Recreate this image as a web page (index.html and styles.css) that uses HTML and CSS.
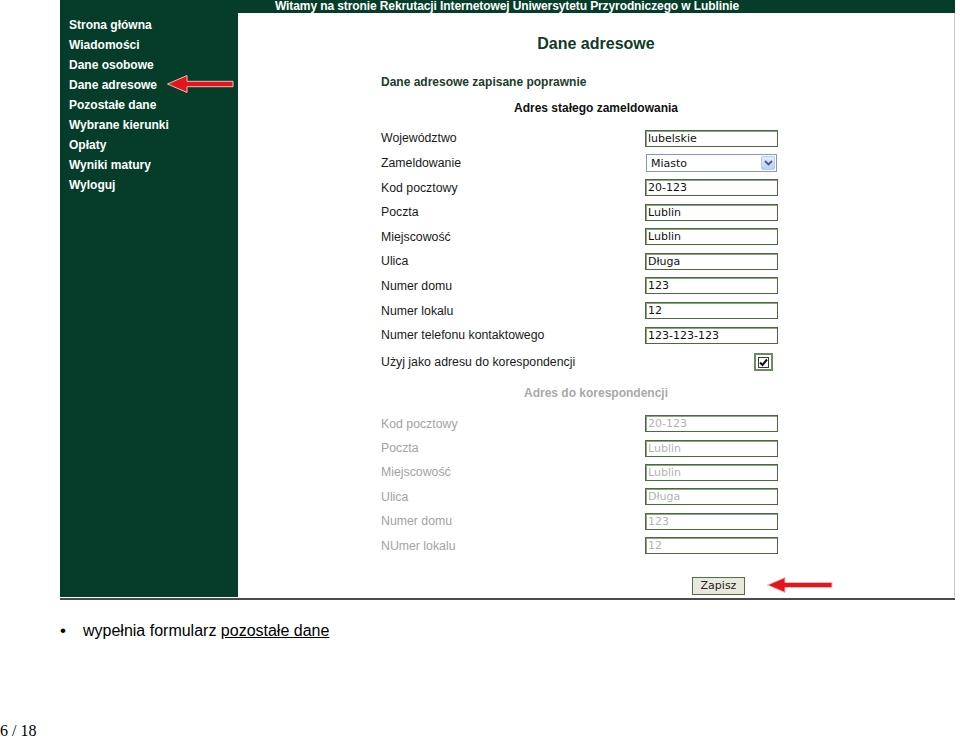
FILE: index.html
```html
<!DOCTYPE html>
<html lang="pl">
<head>
<meta charset="utf-8">
<title>Dane adresowe</title>
<link rel="stylesheet" href="styles.css">
</head>
<body>
<div class="page">
  <div class="frame">
    <nav class="sidebar">
      <a class="nav-item">Strona główna</a>
      <a class="nav-item">Wiadomości</a>
      <a class="nav-item">Dane osobowe</a>
      <a class="nav-item">Dane adresowe</a>
      <a class="nav-item">Pozostałe dane</a>
      <a class="nav-item">Wybrane kierunki</a>
      <a class="nav-item">Opłaty</a>
      <a class="nav-item">Wyniki matury</a>
      <a class="nav-item">Wyloguj</a>
    </nav>
    <main class="main">
      <div class="topbar">Witamy na stronie Rekrutacji Internetowej Uniwersytetu Przyrodniczego w Lublinie</div>
      <div class="content">
        <h1 class="title">Dane adresowe</h1>
        <p class="success">Dane adresowe zapisane poprawnie</p>
        <h2 class="section">Adres stałego zameldowania</h2>
        <div class="form">
          <div class="row"><span class="label">Województwo</span><input class="field" value="lubelskie"></div>
          <div class="row"><span class="label">Zameldowanie</span>
            <div class="select"><span class="select-text">Miasto</span><span class="select-btn"><svg width="9" height="6" viewBox="0 0 9 6"><path d="M1 1 L4.5 4.5 L8 1" fill="none" stroke="#3d5e8c" stroke-width="1.8"/></svg></span></div>
          </div>
          <div class="row"><span class="label">Kod pocztowy</span><input class="field" value="20-123"></div>
          <div class="row"><span class="label">Poczta</span><input class="field" value="Lublin"></div>
          <div class="row"><span class="label">Miejscowość</span><input class="field" value="Lublin"></div>
          <div class="row"><span class="label">Ulica</span><input class="field" value="Długa"></div>
          <div class="row"><span class="label">Numer domu</span><input class="field" value="123"></div>
          <div class="row"><span class="label">Numer lokalu</span><input class="field" value="12"></div>
          <div class="row"><span class="label">Numer telefonu kontaktowego</span><input class="field" value="123-123-123"></div>
          <div class="row row-check"><span class="label">Użyj jako adresu do korespondencji</span>
            <span class="check-cell"><span class="checkbox"><span class="check-inner"><svg width="9" height="9" viewBox="0 0 9 9"><path d="M1 4.5 L3.5 7 L8 1.5" fill="none" stroke="#111" stroke-width="2"/></svg></span></span></span>
          </div>
        </div>
        <h2 class="section muted">Adres do korespondencji</h2>
        <div class="form form-muted">
          <div class="row"><span class="label">Kod pocztowy</span><input class="field off" value="20-123" disabled></div>
          <div class="row"><span class="label">Poczta</span><input class="field off" value="Lublin" disabled></div>
          <div class="row"><span class="label">Miejscowość</span><input class="field off" value="Lublin" disabled></div>
          <div class="row"><span class="label">Ulica</span><input class="field off" value="Długa" disabled></div>
          <div class="row"><span class="label">Numer domu</span><input class="field off" value="123" disabled></div>
          <div class="row"><span class="label">NUmer lokalu</span><input class="field off" value="12" disabled></div>
        </div>
        <div class="actions"><button class="btn" type="button">Zapisz</button></div>
      </div>
    </main>
    <svg class="arrow arrow-nav" width="70" height="20" viewBox="0 0 70 20"><path d="M1.5 10 L21 1.5 L21 7.3 L67 7.3 L67 12.7 L21 12.7 L21 18.5 Z" fill="#e3161b" stroke="#f4b8b8" stroke-width="1"/></svg>
    <svg class="arrow arrow-btn" width="70" height="20" viewBox="0 0 70 20"><path d="M1.5 10 L19 2.5 L19 7.5 L66 7.5 L66 12.5 L19 12.5 L19 17.5 Z" fill="#e3161b" stroke="#f4b8b8" stroke-width="1"/></svg>
  </div>
  <div class="bullet-line"><span class="bullet">•</span><span>wypełnia formularz <u>pozostałe dane</u></span></div>
</div>
<div class="pager">6 / 18</div>
</body>
</html>
```

FILE: styles.css
```css
html, body {
  margin: 0;
  padding: 0;
  background: #fff;
}

.page {
  padding-left: 60px;
  width: 895px;
}

.frame {
  position: relative;
  display: flex;
  padding-bottom: 1px;
  border-bottom: 2px solid #4a4a4a;
}

.sidebar {
  width: 178px;
  flex: none;
  background: #053d2a;
  padding: 15px 0 0 9px;
  box-sizing: border-box;
  display: flex;
  flex-direction: column;
}

.nav-item {
  display: block;
  font-family: "Liberation Sans", Arial, sans-serif;
  font-weight: bold;
  font-size: 12px;
  line-height: 20px;
  color: #fff;
}

.main {
  flex: 1;
  display: flex;
  flex-direction: column;
}

.topbar {
  height: 13px;
  background: #053d2a;
  color: #fff;
  font-family: "Liberation Sans", Arial, sans-serif;
  font-weight: bold;
  font-size: 12px;
  line-height: 13px;
  padding-left: 37px;
  letter-spacing: -0.1px;
  white-space: nowrap;
  overflow: hidden;
}

.content {
  border-right: 1px solid #c8c8c8;
  padding-bottom: 2px;
  font-family: "Liberation Sans", Arial, sans-serif;
}

.title {
  margin: 21px 0 0;
  text-align: center;
  font-size: 16px;
  line-height: 20px;
  font-weight: bold;
  color: #123a29;
}

.success {
  margin: 20px 0 0 143px;
  font-size: 12px;
  line-height: 16px;
  font-weight: bold;
  color: #1a3d2c;
}

.section {
  margin: 10px 0 0;
  text-align: center;
  font-size: 12px;
  line-height: 16px;
  font-weight: bold;
  color: #111;
}

.section.muted {
  margin-top: 8px;
  color: #a9a9a9;
}

.form {
  margin: 10px 0 0 143px;
  width: 397px;
}

.form-muted {
  margin-top: 10px;
}

.row {
  display: flex;
  align-items: center;
  justify-content: space-between;
  height: 24.62px;
}

.form-muted .row {
  height: 24.4px;
}

.row-check {
  height: 30px;
}

.label {
  font-size: 12.3px;
  color: #1a1a1a;
}

.form-muted .label {
  color: #a3a3a3;
}

.field {
  width: 133px;
  height: 17px;
  box-sizing: border-box;
  margin: 0;
  padding: 0 2px;
  border: 1px solid #4b6a42;
  box-shadow: inset 1px 1px 0 #8da484;
  background: #fff;
  font-family: "DejaVu Sans", Verdana, sans-serif;
  font-size: 11px;
  color: #111;
  outline: none;
}

.field.off {
  color: #b3b3b3;
  -webkit-text-fill-color: #b3b3b3;
  background: #fff;
  opacity: 1;
}

.select {
  width: 131px;
  height: 18px;
  margin-right: 1px;
  box-sizing: border-box;
  border: 1px solid #7f9db9;
  display: flex;
  align-items: center;
  justify-content: space-between;
  background: #fff;
}

.select-text {
  font-family: "DejaVu Sans", Verdana, sans-serif;
  font-size: 11px;
  color: #111;
  padding-left: 4px;
  padding-top: 1px;
}

.select-btn {
  width: 14px;
  height: 14px;
  margin-right: 1px;
  box-sizing: border-box;
  border: 1px solid #b7c8ec;
  border-radius: 2px;
  background: linear-gradient(#e4ecfd, #bccdf5);
  display: flex;
  align-items: center;
  justify-content: center;
}

.check-cell {
  width: 133px;
  display: flex;
  justify-content: flex-end;
}

.checkbox {
  width: 19px;
  height: 18px;
  margin-right: 5px;
  box-sizing: border-box;
  border: 2px solid #6c8b62;
  background: #fff;
  display: flex;
  align-items: center;
  justify-content: center;
}

.check-inner {
  width: 11px;
  height: 11px;
  box-sizing: border-box;
  border: 1px solid #3b3b3b;
  display: flex;
  align-items: center;
  justify-content: center;
}

.actions {
  margin-top: 19px;
  padding-left: 454px;
}

.btn {
  width: 53px;
  height: 18px;
  padding: 0;
  box-sizing: border-box;
  border: 1px solid #4f6f44;
  background: #e9e8dc;
  font-family: "DejaVu Sans", Verdana, sans-serif;
  font-size: 11px;
  color: #222;
  display: block;
}

.arrow {
  position: absolute;
}

.arrow-nav {
  left: 106px;
  top: 74px;
}

.arrow-btn {
  left: 706px;
  top: 575px;
}

.bullet-line {
  margin-top: 22px;
  display: flex;
  align-items: center;
  font-family: "Liberation Sans", Arial, sans-serif;
  font-size: 16px;
  line-height: 18px;
  color: #000;
}

.bullet {
  width: 23px;
  font-size: 17px;
}

.pager {
  margin-top: 82px;
  font-family: "Liberation Serif", "Times New Roman", serif;
  font-size: 16px;
  line-height: 18px;
  color: #000;
}
```
